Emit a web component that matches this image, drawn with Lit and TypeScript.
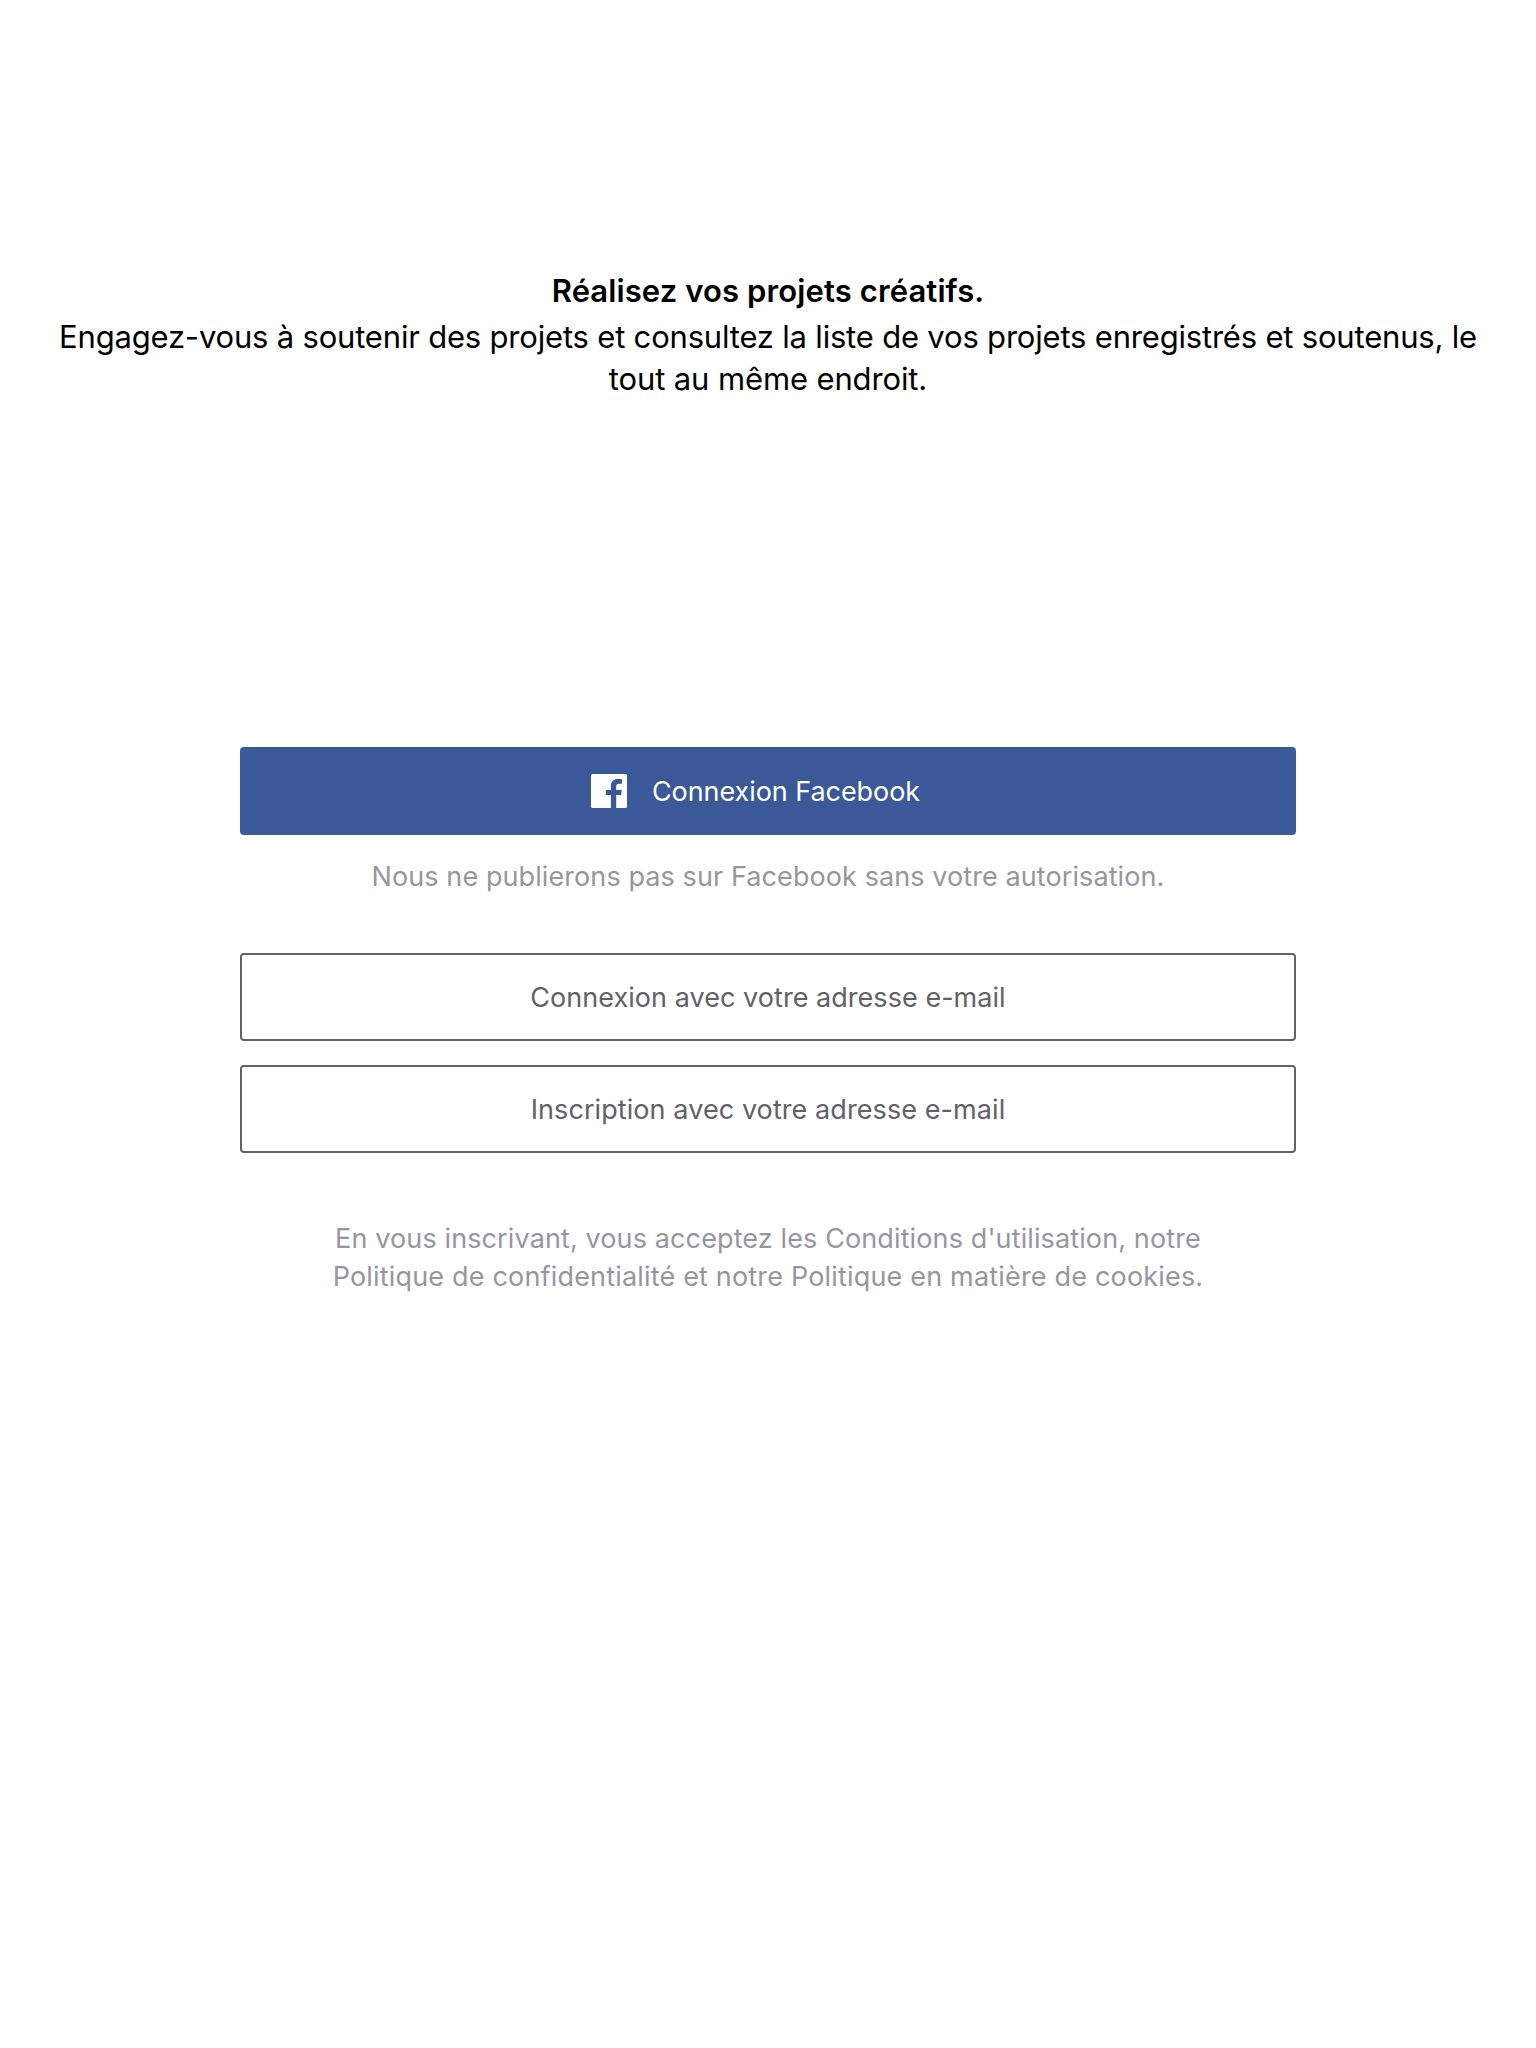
import { LitElement, html, css } from "lit";
import { customElement } from "lit/decorators.js";

@customElement("app-root")
export class AppRoot extends LitElement {
  static styles = css`
    :host {
      display: block;
      font-family: Inter, "Liberation Sans", sans-serif;
    }
    * {
      box-sizing: border-box;
    }
    .page {
      min-height: 2048px;
      padding-top: 270px;
      background: #fff;
      display: flex;
      flex-direction: column;
      align-items: center;
      text-align: center;
    }
    h1,
    p {
      margin: 0;
    }
    .line {
      display: block;
      white-space: nowrap;
    }
    h1 {
      font-size: 31px;
      font-weight: 600;
      line-height: 42px;
      letter-spacing: 0.11px;
      color: #000;
    }
    .intro {
      margin-top: 4px;
      font-size: 31px;
      line-height: 42px;
      color: #000;
      letter-spacing: -0.192px;
    }
    .intro .last {
      letter-spacing: -0.126px;
    }
    .actions {
      width: 1056px;
      margin-top: 347px;
      display: flex;
      flex-direction: column;
      font-size: 27px;
      line-height: 38px;
    }
    button {
      height: 88px;
      margin: 0;
      padding: 0;
      border: 2px solid #626167;
      border-radius: 4px;
      background: #fff;
      color: #626167;
      font: inherit;
      display: flex;
      align-items: center;
      justify-content: center;
    }
    .label {
      padding-top: 2px;
    }
    .facebook {
      border: 0;
      padding-right: 25px;
      gap: 25px;
      background: #3b5998;
      color: #fff;
      letter-spacing: -0.06px;
    }
    .facebook svg {
      display: block;
      width: 36px;
      height: 34px;
    }
    .note {
      margin-top: 23px;
      color: #9796a0;
      letter-spacing: 0.089px;
    }
    .login {
      margin-top: 57px;
      letter-spacing: 0.042px;
    }
    .signup {
      margin-top: 24px;
      letter-spacing: 0.08px;
    }
    .legal {
      margin-top: 67px;
      color: #9796a0;
      letter-spacing: 0.118px;
    }
    .legal .last {
      letter-spacing: 0.178px;
    }
  `;

  render() {
    return html`
      <main class="page">
        <h1>Réalisez vos projets créatifs.</h1>
        <p class="intro">
          <span class="line">Engagez-vous à soutenir des projets et consultez la liste de vos projets enregistrés et soutenus, le</span>
          <span class="line last">tout au même endroit.</span>
        </p>
        <section class="actions">
          <button class="facebook">
            <svg viewBox="0 0 36 34" aria-hidden="true">
              <path
                fill="#fff"
                d="M1.5 0H34.5Q36 0 36 1.5V32.5Q36 34 34.5 34H25.2V21.1H30.1L30.8 15.9H25.2V12.4C25.2 10.6 26 9.8 27.9 9.8H31V5.3C30.3 5.1 28.9 5 27.3 5C22.7 5 19.9 7.4 19.9 11.8V15.9H14.8V21.1H19.9V34H1.5Q0 34 0 32.5V1.5Q0 0 1.5 0Z"
              />
            </svg>
            <span class="label">Connexion Facebook</span>
          </button>
          <p class="note">Nous ne publierons pas sur Facebook sans votre autorisation.</p>
          <button class="login"><span class="label">Connexion avec votre adresse e-mail</span></button>
          <button class="signup"><span class="label">Inscription avec votre adresse e-mail</span></button>
          <p class="legal">
            <span class="line">En vous inscrivant, vous acceptez les Conditions d'utilisation, notre</span>
            <span class="line last">Politique de confidentialité et notre Politique en matière de cookies.</span>
          </p>
        </section>
      </main>
    `;
  }
}
